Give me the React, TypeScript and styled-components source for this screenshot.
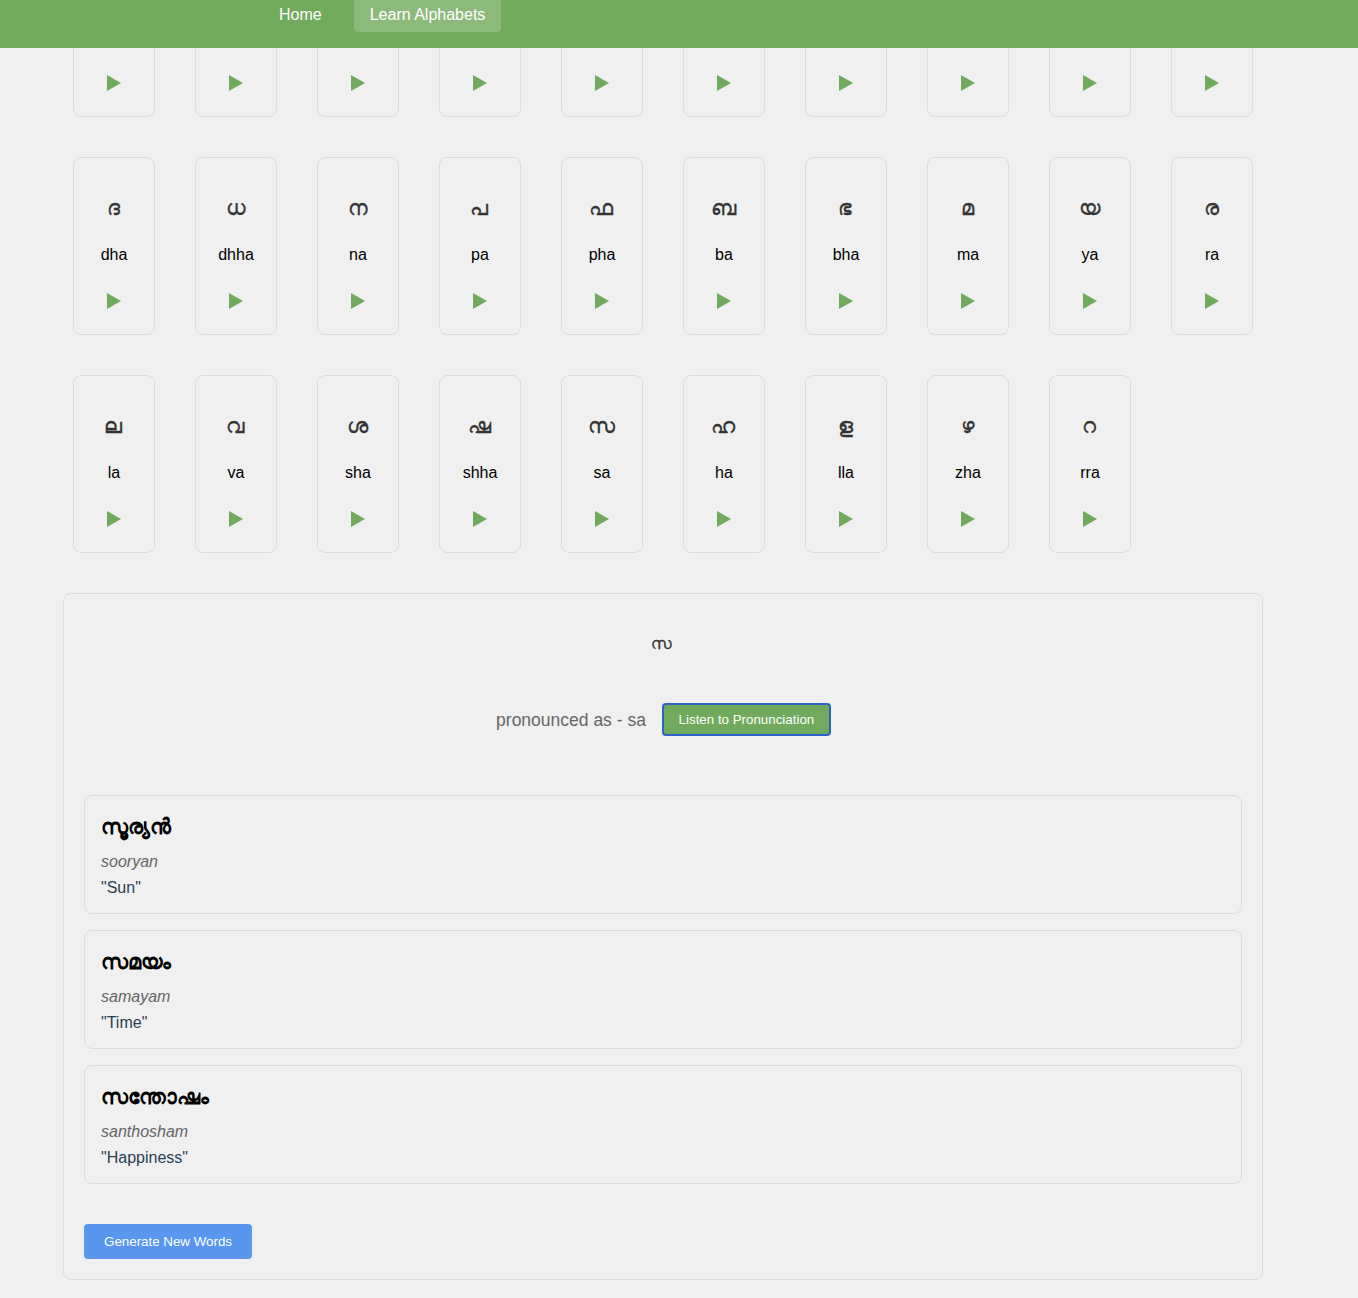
import * as React from 'react';
import styled, { createGlobalStyle } from 'styled-components';

interface Letter {
  glyph: string;
  roman: string;
}

interface Word {
  text: string;
  roman: string;
  meaning: string;
}

// first row sits behind the header, only the play buttons show
const letters: Letter[] = [
  ...Array.from({ length: 10 }, () => ({ glyph: '', roman: '' })),
  { glyph: 'ദ', roman: 'dha' },
  { glyph: 'ധ', roman: 'dhha' },
  { glyph: 'ന', roman: 'na' },
  { glyph: 'പ', roman: 'pa' },
  { glyph: 'ഫ', roman: 'pha' },
  { glyph: 'ബ', roman: 'ba' },
  { glyph: 'ഭ', roman: 'bha' },
  { glyph: 'മ', roman: 'ma' },
  { glyph: 'യ', roman: 'ya' },
  { glyph: 'ര', roman: 'ra' },
  { glyph: 'ല', roman: 'la' },
  { glyph: 'വ', roman: 'va' },
  { glyph: 'ശ', roman: 'sha' },
  { glyph: 'ഷ', roman: 'shha' },
  { glyph: 'സ', roman: 'sa' },
  { glyph: 'ഹ', roman: 'ha' },
  { glyph: 'ള', roman: 'lla' },
  { glyph: 'ഴ', roman: 'zha' },
  { glyph: 'റ', roman: 'rra' },
];

const words: Word[] = [
  { text: 'സൂര്യൻ', roman: 'sooryan', meaning: '"Sun"' },
  { text: 'സമയം', roman: 'samayam', meaning: '"Time"' },
  { text: 'സന്തോഷം', roman: 'santhosham', meaning: '"Happiness"' },
];

const GlobalStyle = createGlobalStyle`
  html, body {
    margin: 0;
    padding: 0;
    background: #f0f0f0;
    overflow: hidden;
  }
  body {
    font-family: "Liberation Sans", Arial, sans-serif;
    font-size: 16px;
  }
`;

const Page = styled.div`
  height: 1298px;
  overflow: hidden;
`;

const Header = styled.header`
  position: relative;
  z-index: 2;
  height: 48px;
  background: #71aa5d;
  display: flex;
  align-items: flex-start;
  gap: 16px;
  padding-left: 263px;
  box-sizing: border-box;
`;

const NavLink = styled.a<{ $active?: boolean }>`
  margin-top: -4px;
  height: 36px;
  padding: 2px 16px 0;
  box-sizing: border-box;
  display: flex;
  align-items: center;
  border-radius: 4px;
  color: #fff;
  font-size: 16px;
  background: ${p => (p.$active ? '#8cba7c' : 'transparent')};
`;

const Main = styled.main`
  margin-top: -109px;
  margin-left: 63px;
  width: 1200px;
`;

const LetterGrid = styled.div`
  display: grid;
  grid-template-columns: repeat(10, 82px);
  gap: 40px;
  padding: 0 10px;
`;

const LetterCard = styled.div`
  box-sizing: border-box;
  height: 178px;
  border: 1px solid #ddd;
  border-radius: 8px;
  padding-top: 32px;
  display: flex;
  flex-direction: column;
  align-items: center;
`;

const LetterGlyph = styled.div`
  height: 37px;
  line-height: 36px;
  padding-right: 2px;
  font-size: 21px;
  color: #333;
  -webkit-text-stroke: 0.3px #333;
`;

const LetterRoman = styled.div`
  margin-top: 19px;
  height: 18px;
  line-height: 18px;
  font-size: 16px;
  color: #000;
`;

const PlayIcon = styled.svg`
  display: block;
  margin-top: 29px;
  width: 14px;
  height: 16px;
  fill: #71aa5d;
`;

const Panel = styled.section`
  box-sizing: border-box;
  margin-top: 40px;
  height: 687px;
  border: 1px solid #ddd;
  border-radius: 8px;
  padding: 0 20px;
  display: flex;
  flex-direction: column;
`;

const PanelGlyph = styled.div`
  margin-top: 34px;
  height: 32px;
  line-height: 32px;
  padding-right: 3px;
  text-align: center;
  font-size: 16px;
  color: #333;
  -webkit-text-stroke: 0.3px #333;
`;

const PronounceRow = styled.div`
  margin-top: 43px;
  padding-left: 1px;
  display: flex;
  justify-content: center;
  align-items: center;
  gap: 16px;
`;

const PronounceText = styled.span`
  padding-top: 2px;
  font-size: 17.5px;
  color: #666;
`;

const ListenButton = styled.button`
  box-sizing: border-box;
  width: 169px;
  height: 33px;
  padding: 0;
  border: 2px solid #2f62c8;
  border-radius: 4px;
  background: #71aa5d;
  color: #fff;
  font-family: inherit;
  font-size: 13.33px;
`;

const WordList = styled.div`
  margin-top: 59px;
  display: flex;
  flex-direction: column;
  gap: 16px;
`;

const WordCard = styled.article`
  box-sizing: border-box;
  height: 119px;
  border: 1px solid #ddd;
  border-radius: 8px;
  padding: 16px 16px 0;
`;

const WordText = styled.div`
  height: 30px;
  line-height: 30px;
  font-size: 21px;
  font-weight: 700;
  color: #000;
`;

const WordRoman = styled.div`
  margin-top: 10px;
  height: 20px;
  line-height: 20px;
  font-style: italic;
  color: #666;
`;

const WordMeaning = styled.div`
  margin-top: 6px;
  height: 20px;
  line-height: 20px;
  color: #2c3e50;
`;

const GenerateButton = styled.button`
  align-self: flex-start;
  margin-top: 40px;
  width: 168px;
  height: 35px;
  padding: 0;
  border: 0;
  border-radius: 4px;
  background: #5897ed;
  color: #fff;
  font-family: inherit;
  font-size: 13.33px;
`;

const App: React.FC = () => (
  <Page>
    <GlobalStyle />
    <Header>
      <NavLink>Home</NavLink>
      <NavLink $active>Learn Alphabets</NavLink>
    </Header>
    <Main>
      <LetterGrid>
        {letters.map((letter, index) => (
          <LetterCard key={index}>
            <LetterGlyph>{letter.glyph}</LetterGlyph>
            <LetterRoman>{letter.roman}</LetterRoman>
            <PlayIcon viewBox="0 0 14 16">
              <polygon points="0,0 14,8 0,16" />
            </PlayIcon>
          </LetterCard>
        ))}
      </LetterGrid>
      <Panel>
        <PanelGlyph>സ</PanelGlyph>
        <PronounceRow>
          <PronounceText>pronounced as - sa</PronounceText>
          <ListenButton>Listen to Pronunciation</ListenButton>
        </PronounceRow>
        <WordList>
          {words.map(word => (
            <WordCard key={word.roman}>
              <WordText>{word.text}</WordText>
              <WordRoman>{word.roman}</WordRoman>
              <WordMeaning>{word.meaning}</WordMeaning>
            </WordCard>
          ))}
        </WordList>
        <GenerateButton>Generate New Words</GenerateButton>
      </Panel>
    </Main>
  </Page>
);

export default App;
